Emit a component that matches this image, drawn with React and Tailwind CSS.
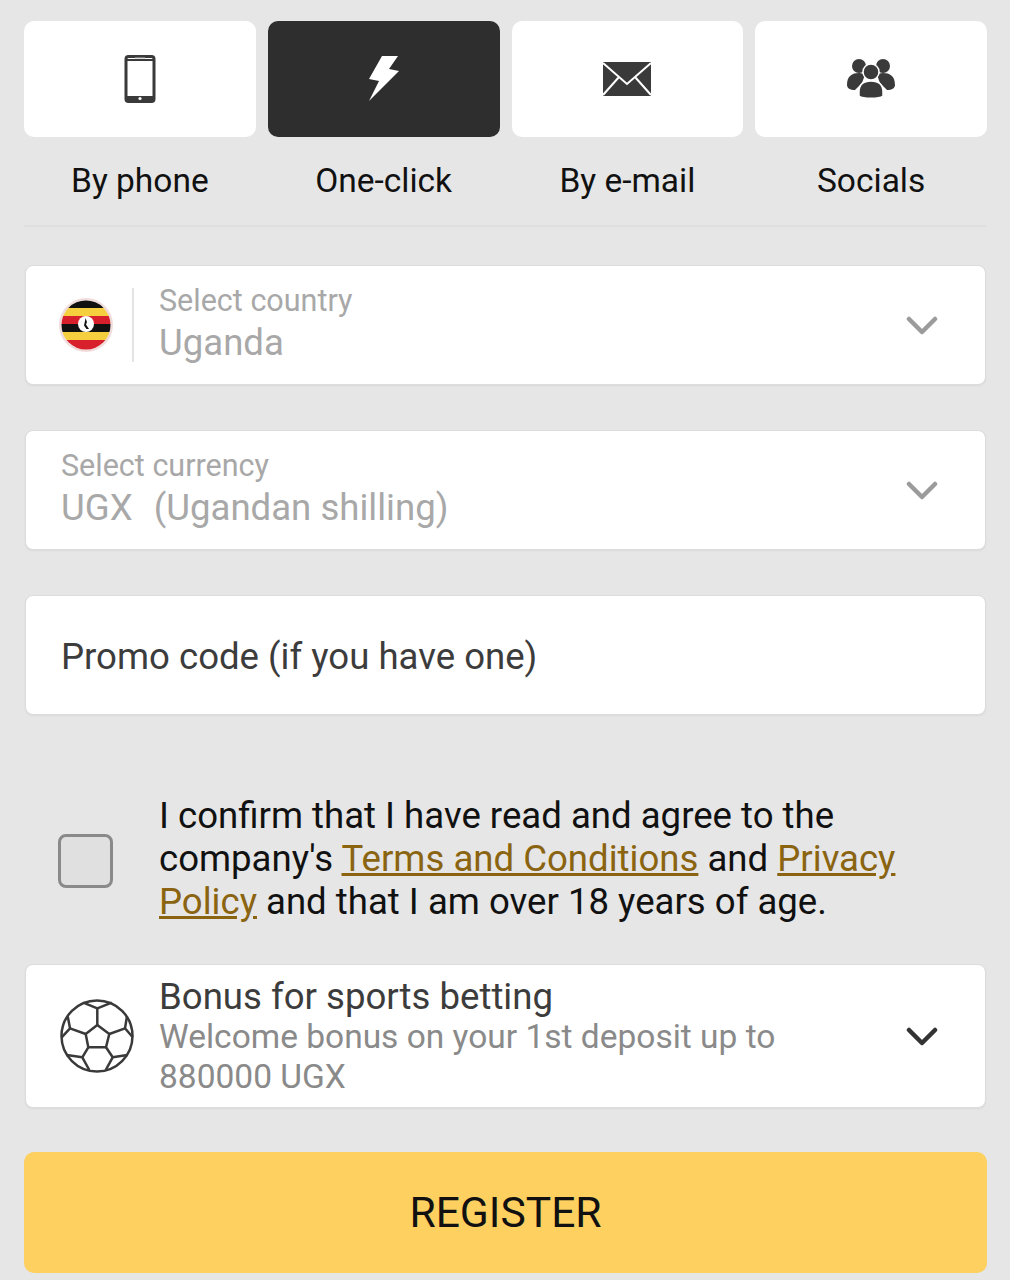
import React from 'react';

const PhoneIcon = () => (
  <svg width="32" height="48" viewBox="0 0 32 48">
    <rect x="2" y="1.5" width="28" height="45" rx="2.5" fill="none" stroke="#3a3a3a" strokeWidth="3" />
    <rect x="2" y="4" width="28" height="2" fill="#3a3a3a" />
    <rect x="2" y="41" width="28" height="5" fill="#3a3a3a" />
    <rect x="11" y="2.5" width="10" height="1" fill="#bbb" />
    <circle cx="16" cy="43.5" r="1.6" fill="#fff" />
  </svg>
);

const BoltIcon = () => (
  <svg width="32" height="48" viewBox="0 0 32 48">
    <path d="M14 1H30L21 14L31 16L1 46L11 26L1 24Z" fill="#fff" />
  </svg>
);

const MailIcon = () => (
  <svg width="50" height="36" viewBox="0 0 50 36">
    <rect x="1" y="1" width="48" height="34" fill="#3a3a3a" />
    <path d="M1 2L25 23L49 2M1 34L17 16M49 34L33 16" fill="none" stroke="#fff" strokeWidth="2" />
  </svg>
);

const GroupIcon = () => (
  <svg width="50" height="42" viewBox="0 0 50 42" fill="#3a3a3a">
    <circle cx="13" cy="8" r="7" />
    <circle cx="37" cy="8" r="7" />
    <path d="M1 27C1 18 6 15 13 15C16 15 18 16 19 17C17 21 17 25 13 28L9 32C4 32 1 30 1 27Z" />
    <path d="M49 27C49 18 44 15 37 15C34 15 32 16 31 17C33 21 33 25 37 28L41 32C46 32 49 30 49 27Z" />
    <circle cx="25" cy="14" r="8" stroke="#fff" strokeWidth="1.5" />
    <path d="M13 34C13 26 18 23 25 23C32 23 37 26 37 34V38C33 41 17 41 13 38Z" stroke="#fff" strokeWidth="1.5" />
  </svg>
);

const Chevron = ({ color = '#9b9b9b' }) => (
  <svg width="32" height="20" viewBox="0 0 32 20" className="shrink-0 mt-[2px]">
    <path d="M3 3L16 16L29 3" fill="none" stroke={color} strokeWidth="4.5" strokeLinecap="round" strokeLinejoin="round" />
  </svg>
);

const UgandaFlag = () => (
  <svg width="54" height="54" viewBox="0 0 54 54" className="shrink-0">
    <defs>
      <clipPath id="flag">
        <circle cx="27" cy="27" r="24.5" />
      </clipPath>
    </defs>
    <circle cx="27" cy="27" r="27" fill="#f1dcdc" />
    <g clipPath="url(#flag)">
      <rect y="2" width="54" height="8" fill="#111" />
      <rect y="10" width="54" height="8" fill="#f6cf3f" />
      <rect y="18" width="54" height="8" fill="#d8202c" />
      <rect y="26" width="54" height="8" fill="#111" />
      <rect y="34" width="54" height="8" fill="#f6cf3f" />
      <rect y="42" width="54" height="10" fill="#d8202c" />
    </g>
    <circle cx="27" cy="26" r="8" fill="#fff" />
    <path d="M26.5 20L28 24L27 26.5L30 31H27.5L25 27.5L26 23Z" fill="#111" />
  </svg>
);

const SoccerBall = () => (
  <svg width="74" height="74" viewBox="0 0 74 74" className="shrink-0" fill="none" stroke="#3a3a3a" strokeWidth="2.5" strokeLinejoin="round">
    <circle cx="37" cy="37" r="35.5" />
    <path d="M37.3 26L49.3 35L46 48.3H28.3L25.7 35Z" />
    <path d="M37.3 26V9.3M25.7 35L10 29.3M49.3 35L65 29.3M28.3 48.3L22.3 58.3M46 48.3L52.7 58.3" />
    <path d="M23.3 3.7L37.3 9.3L51.7 3.7" />
    <path d="M7.7 17.3L10 29.3L1.7 38.3M67 17.3L65 29.3L72.7 38.3" />
    <path d="M6.7 56L22.3 58.3L29.3 71M67.3 56L52.7 58.3L45.7 71" />
  </svg>
);

const tabs = [
  { label: 'By phone', icon: <PhoneIcon /> },
  { label: 'One-click', icon: <BoltIcon />, active: true },
  { label: 'By e-mail', icon: <MailIcon /> },
  { label: 'Socials', icon: <GroupIcon /> },
];

const cardClass = 'mx-[1px] bg-white rounded-lg border border-[#dcdcdc] shadow-[0_1px_2px_rgba(0,0,0,0.06)]';

export default function App() {
  return (
    <div className="w-[1010px] h-[1280px] overflow-hidden bg-[#e6e6e6] px-6 pt-[21px] font-['Roboto',sans-serif]">
      <div className="w-[963px]">
        <div className="grid grid-cols-4 gap-3">
          {tabs.map((t) => (
            <div key={t.label} className="flex flex-col items-center">
              <div className={`w-full h-[116px] rounded-[10px] flex items-center justify-center ${t.active ? 'bg-[#2e2e2e]' : 'bg-white'}`}>
                {t.icon}
              </div>
              <div className="mt-[23px] text-[33.5px] leading-[42px] text-[#111]">{t.label}</div>
            </div>
          ))}
        </div>
        <div className="mt-[23px] h-[2px] bg-[#dfdfdf]" />

        <div className={`${cardClass} mt-[38px] h-[120px] flex items-center pl-[33px] pr-[47px]`}>
          <UgandaFlag />
          <div className="ml-[19px] w-[2px] h-[74px] bg-[#e4e4e4]" />
          <div className="ml-[25px] flex-1 pb-[4px]">
            <div className="text-[30.5px] leading-[38px] text-[#a8a8a8]">Select country</div>
            <div className="text-[36.6px] leading-[45px] text-[#a8a8a8]">Uganda</div>
          </div>
          <Chevron />
        </div>

        <div className={`${cardClass} mt-[45px] h-[120px] flex items-center pl-[35px] pr-[47px]`}>
          <div className="flex-1 pb-[4px]">
            <div className="text-[30.5px] leading-[38px] text-[#a8a8a8]">Select currency</div>
            <div className="text-[36.6px] leading-[45px] text-[#a8a8a8] whitespace-pre">
              UGX  <span className="ml-[3px]">(Ugandan shilling)</span>
            </div>
          </div>
          <Chevron />
        </div>

        <div className={`${cardClass} mt-[45px] h-[120px] flex items-center pl-[35px] pt-[3px]`}>
          <div className="text-[36.6px] leading-[44px] text-[#3c3c3c]">Promo code (if you have one)</div>
        </div>

        <div className="mt-[79px] flex items-center pl-[34px]">
          <div className="w-[55px] h-[54px] mt-[4px] shrink-0 rounded-lg border-[3px] border-[#8a8a8a] bg-[#e0e0e0]" />
          <p className="ml-[46px] w-[790px] text-[36.6px] leading-[43px] text-[#111]">
            I confirm that I have read and agree to the company's{' '}
            <span className="underline text-[#8a6410]">Terms and Conditions</span> and{' '}
            <span className="underline text-[#8a6410]">Privacy Policy</span> and that I am over 18 years of age.
          </p>
        </div>

        <div className={`${cardClass} mt-[41px] h-[144px] flex items-center pl-[34px] pr-[47px]`}>
          <SoccerBall />
          <div className="ml-[25px] flex-1">
            <div className="text-[36.6px] leading-[41px] text-[#3c3c3c]">Bonus for sports betting</div>
            <div className="max-w-[660px] text-[33.5px] leading-[40px] text-[#8a8a8a]">Welcome bonus on your 1st deposit up to 880000 UGX</div>
          </div>
          <Chevron color="#333333" />
        </div>

        <div className="mt-[44px] h-[121px] rounded-[10px] bg-[#fdd05f] flex items-center justify-center text-[42.6px] text-[#111]">
          REGISTER
        </div>
      </div>
    </div>
  );
}
